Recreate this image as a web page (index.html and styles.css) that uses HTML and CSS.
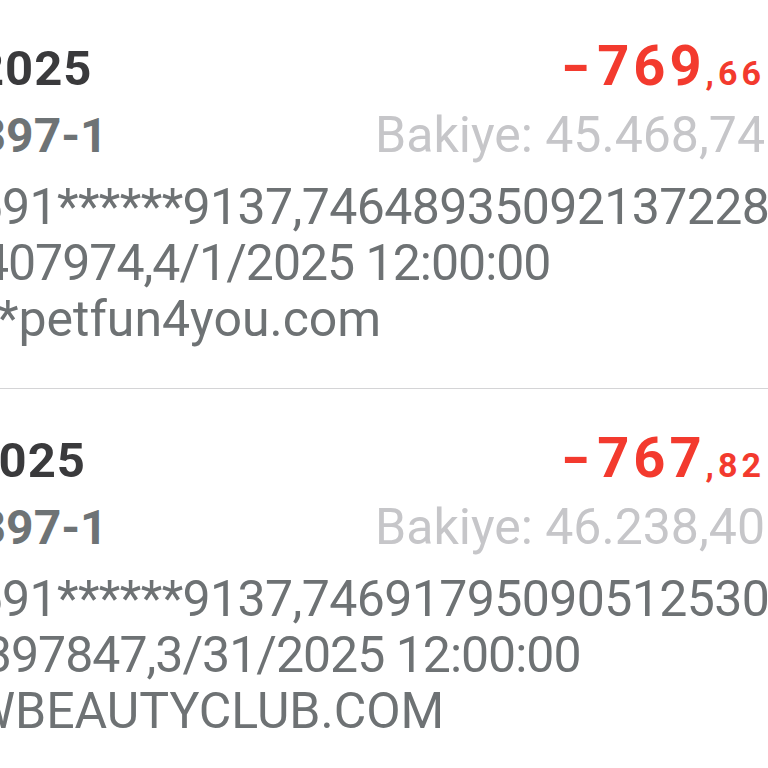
FILE: index.html
```html
<!DOCTYPE html>
<html lang="tr">

<head>
    <meta charset="UTF-8">
    <meta name="viewport" content="width=device-width, initial-scale=1.0">
    <title>Hesap Hareketleri</title>
    <link rel="stylesheet" href="styles.css">
</head>

<body>
    <ul class="txn-list">
        <li class="txn">
            <div class="txn__head">
                <span class="txn__title">1 Nisan, 2025</span>
                <span class="txn__amount"><span class="txn__sign">-</span>769<span class="txn__cents">,66</span></span>
            </div>
            <div class="txn__sub">
                <span class="txn__ref">No: 4213397-1</span>
                <span class="txn__balance">Bakiye: 45.468,74</span>
            </div>
            <div class="txn__desc">
                <div class="txn__num">5406543591******9137,746489350921372286</div>
                <div class="txn__date">5013984&thinsp;407974,4/1/2025 12:00:00</div>
                <div>SHOPIFY *petfun4you.com</div>
            </div>
        </li>
        <li class="txn">
            <div class="txn__head">
                <span class="txn__title">31 Mart 2025</span>
                <span class="txn__amount"><span class="txn__sign">-</span>767<span class="txn__cents">,82</span></span>
            </div>
            <div class="txn__sub">
                <span class="txn__ref">No: 4212397-1</span>
                <span class="txn__balance">Bakiye: 46.238,40</span>
            </div>
            <div class="txn__desc">
                <div class="txn__num">5406543591******9137,746917950905125304</div>
                <div class="txn__date">2104555.397847,3/31/2025 12:00:00</div>
                <div>PAYPAL WBEAUTYCLUB.COM</div>
            </div>
        </li>
    </ul>
</body>

</html>
```
FILE: styles.css
```css
* {
    box-sizing: border-box;
}

body {
    margin: 0;
    background-color: #fff;
    overflow: hidden;
    font-family: Roboto, "Liberation Sans", sans-serif;
}

/* list is wider than the window, the screen is zoomed in */
.txn-list {
    list-style: none;
    margin: -3px 0 0 -218px;
    padding: 0;
    width: 986px;
}

.txn {
    padding: 41px 3px 41px 0;
    border-bottom: 1px solid #d4d4d6;
}

.txn__head,
.txn__sub {
    display: flex;
    justify-content: space-between;
    align-items: baseline;
    white-space: nowrap;
    line-height: 1;
}

.txn__head {
    height: 72px;
}

.txn__sub {
    height: 69px;
}

.txn__title {
    margin-left: -6px;
    font-size: 49px;
    font-weight: 700;
    letter-spacing: 1px;
    color: #3a3a3c;
}

.txn__amount {
    font-size: 56px;
    font-weight: 700;
    color: #f33a2e;
    letter-spacing: 4px;
}

.txn__sign {
    display: inline-block;
    transform: scaleX(1.4);
    transform-origin: right center;
}

.txn__cents {
    font-size: 34px;
    letter-spacing: 4px;
    line-height: 1;
}

.txn__ref {
    font-size: 48px;
    font-weight: 700;
    color: #6e7375;
}

.txn__balance {
    font-size: 50px;
    color: #c6c6c9;
}

.txn__desc {
    font-size: 50px;
    line-height: 56px;
    color: #6e7274;
    white-space: nowrap;
}

.txn__num {
    letter-spacing: -0.6px;
}

.txn__date {
    letter-spacing: -1px;
}
```
